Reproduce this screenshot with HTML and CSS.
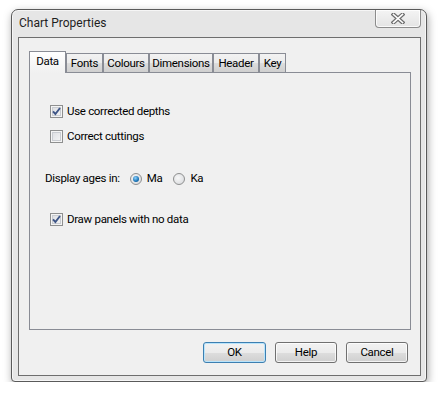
FILE: index.html
```html
<!DOCTYPE html>
<html>
<head>
<meta charset="utf-8">
<link rel="stylesheet" href="styles.css">
</head>
<body>
<div class="window">
  <div class="titlebar">
    <div class="title">Chart Properties</div>
    <div class="close">
      <svg width="14" height="11" viewBox="0 0 14 11">
        <path d="M2.5 1.5 L11.5 9.5 M11.5 1.5 L2.5 9.5" stroke="#6d6d6d" stroke-width="4" stroke-linecap="square" fill="none"/>
        <path d="M2.5 1.5 L11.5 9.5 M11.5 1.5 L2.5 9.5" stroke="#ffffff" stroke-width="1.6" stroke-linecap="square" fill="none"/>
      </svg>
    </div>
  </div>
  <div class="client">
    <div class="tabstrip">
      <div class="tab tab-data selected">Data</div>
      <div class="tab tab-fonts">Fonts</div>
      <div class="tab tab-colours">Colours</div>
      <div class="tab tab-dims">Dimensions</div>
      <div class="tab tab-header">Header</div>
      <div class="tab tab-key">Key</div>
    </div>
    <div class="panel">
      <label class="row check-row first">
        <span class="checkbox checked">
          <svg width="9" height="9" viewBox="0 0 9 9"><path d="M1 4.3 L3.4 7 L8 1" stroke="#3f5687" stroke-width="1.9" fill="none"/></svg>
        </span>
        <span class="label">Use corrected depths</span>
      </label>
      <label class="row check-row second">
        <span class="checkbox"></span>
        <span class="label">Correct cuttings</span>
      </label>
      <div class="row radio-row">
        <span class="label ages">Display ages in:</span>
        <span class="radio on"><span class="dot"></span></span>
        <span class="label">Ma</span>
        <span class="radio off"></span>
        <span class="label">Ka</span>
      </div>
      <label class="row check-row fourth">
        <span class="checkbox checked">
          <svg width="9" height="9" viewBox="0 0 9 9"><path d="M1 4.3 L3.4 7 L8 1" stroke="#3f5687" stroke-width="1.9" fill="none"/></svg>
        </span>
        <span class="label">Draw panels with no data</span>
      </label>
    </div>
    <div class="buttons">
      <div class="btn default">OK</div>
      <div class="btn">Help</div>
      <div class="btn">Cancel</div>
    </div>
  </div>
</div>
</body>
</html>
```

FILE: styles.css
```css
html, body {
  margin: 0;
  padding: 0;
  background: #ffffff;
}
body {
  font-family: Roboto, "Liberation Sans", sans-serif;
  font-size: 11.5px;
  letter-spacing: -0.3px;
  color: #000;
}
.window {
  box-sizing: border-box;
  margin: 9px 0 0 11px;
  width: 416px;
  height: 373px;
  border: 1px solid #5a5a5a;
  border-radius: 7px 7px 4px 4px;
  background: #e6e6e6;
  box-shadow: 1px 3px 9px rgba(0,0,0,0.35), inset 0 0 0 1px #f6f6f6;
  display: flex;
  flex-direction: column;
}
.titlebar {
  height: 27px;
  display: flex;
  align-items: flex-start;
  justify-content: space-between;
  padding: 0 5px 0 7px;
  flex: none;
}
.title {
  line-height: 27px;
  height: 27px;
  font-size: 12px;
  letter-spacing: 0;
  color: #1e1e1e;
}
.close {
  box-sizing: border-box;
  width: 46px;
  height: 18px;
  border: 1px solid #8c8c8c;
  border-top: none;
  border-radius: 0 0 4px 4px;
  background: linear-gradient(#f4f4f4, #e4e4e4);
  box-shadow: inset 0 0 0 1px rgba(255,255,255,0.8);
  display: flex;
  align-items: center;
  justify-content: center;
}
.client {
  box-sizing: border-box;
  margin: 0 5px 0 6px;
  height: 339px;
  border: 1px solid #6e6e6e;
  background: #f0f0f0;
  padding: 13px 9px 0 10px;
  display: flex;
  flex-direction: column;
}
.tabstrip {
  display: flex;
  align-items: flex-end;
  height: 21px;
  flex: none;
  position: relative;
  z-index: 1;
}
.tab {
  box-sizing: border-box;
  height: 19px;
  border: 1px solid #898c95;
  border-bottom: none;
  background: linear-gradient(#f2f2f2 0%, #ebebeb 50%, #dddddd 51%, #cfcfcf 100%);
  text-align: center;
  line-height: 18px;
}
.tab.selected {
  height: 22px;
  margin-bottom: -1px;
  background: linear-gradient(#ffffff, #f0f0f0);
  line-height: 19px;
}
.tab-data { width: 37px; }
.tab-fonts { width: 37px; }
.tab-colours { width: 46px; }
.tab-dims { width: 64px; }
.tab-header { width: 46px; }
.tab-key { width: 27px; }
.panel {
  box-sizing: border-box;
  width: 382px;
  height: 258px;
  border: 1px solid #898c95;
  background: #f0f0f0;
  display: flex;
  flex-direction: column;
  align-items: flex-start;
  flex: none;
}
.row {
  display: flex;
  align-items: center;
  height: 17px;
}
.check-row { padding-left: 20px; }
.first { margin-top: 30px; }
.second { margin-top: 8px; }
.radio-row { margin-top: 25px; padding-left: 15px; }
.fourth { margin-top: 24px; }
.checkbox {
  box-sizing: border-box;
  width: 13px;
  height: 13px;
  border: 1px solid #8e8f8f;
  background: linear-gradient(135deg, #d9dbdf, #f7f7f7);
  box-shadow: inset 0 0 0 1px #f4f4f4, inset 0 0 0 2px #c9ccd1;
  display: flex;
  align-items: center;
  justify-content: center;
  margin-right: 4px;
}
.checkbox svg { display: block; }
.label { line-height: 17px; }
.ages { margin-right: 10px; }
.radio {
  box-sizing: border-box;
  width: 12px;
  height: 12px;
  border-radius: 50%;
  border: 1px solid #8e8f8f;
  background: radial-gradient(circle at 40% 40%, #f8f8f8, #d4d6d9);
  display: flex;
  align-items: center;
  justify-content: center;
  margin-right: 5px;
}
.radio.off { margin-left: 11px; }
.dot {
  width: 6px;
  height: 6px;
  border-radius: 50%;
  background: radial-gradient(circle at 40% 35%, #8fd3ff, #1a73b5 60%, #0d4f85);
}
.buttons {
  display: flex;
  justify-content: flex-end;
  gap: 9px;
  margin-top: 12px;
  padding-right: 3px;
}
.btn {
  box-sizing: border-box;
  width: 62px;
  height: 21px;
  border: 1px solid #707070;
  border-radius: 3px;
  background: linear-gradient(#f2f2f2 0%, #ebebeb 50%, #dddddd 51%, #cfcfcf 100%);
  box-shadow: inset 0 0 0 1px rgba(255,255,255,0.75);
  text-align: center;
  line-height: 19px;
}
.btn.default {
  width: 63px;
  border-color: #3c7fb1;
  box-shadow: inset 0 0 0 1px #b9e4fb;
}
```
